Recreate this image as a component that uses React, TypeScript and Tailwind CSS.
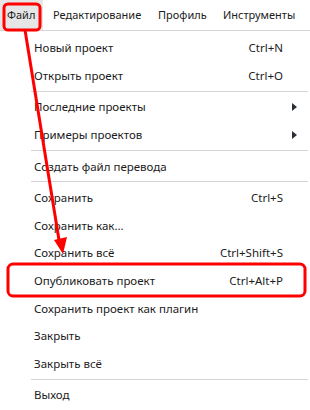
import { Fragment } from "react";

type Item = { label: string; shortcut?: string; sub?: boolean } | "sep";

const items: Item[] = [
  { label: "Новый проект", shortcut: "Ctrl+N" },
  { label: "Открыть проект", shortcut: "Ctrl+O" },
  "sep",
  { label: "Последние проекты", sub: true },
  { label: "Примеры проектов", sub: true },
  "sep",
  { label: "Создать файл перевода" },
  "sep",
  { label: "Сохранить", shortcut: "Ctrl+S" },
  { label: "Сохранить как..." },
  { label: "Сохранить всё", shortcut: "Ctrl+Shift+S" },
  { label: "Опубликовать проект", shortcut: "Ctrl+Alt+P" },
  { label: "Сохранить проект как плагин" },
  { label: "Закрыть" },
  { label: "Закрыть всё" },
  "sep",
  { label: "Выход" },
];

const menus = [
  { label: "Файл", cls: "w-[43px] pl-[7px] bg-[#e6e6e6]" },
  { label: "Редактирование", cls: "w-[105px] pl-[10px]" },
  { label: "Профиль", cls: "w-[65px] pl-[10px]" },
  { label: "Инструменты", cls: "w-[97px] pl-[10px]" },
];

const App = () => {
  return (
    <div
      className="relative w-[310px] h-[410px] bg-white overflow-hidden text-[11.5px] text-[#1b1b1b]"
      style={{ fontFamily: '"Noto Sans", "Open Sans", sans-serif' }}
    >
      <div className="flex h-[31px] border-b border-[#d4d4da] text-[11px]">
        {menus.map((m) => (
          <div key={m.label} className={`flex items-center whitespace-nowrap ${m.cls}`}>
            {m.label}
          </div>
        ))}
      </div>

      <div className="flex flex-col pt-[3px]">
        {items.map((item, index) =>
          item === "sep" ? (
            <div
              key={index}
              className="ml-[31px] mr-[2px] my-[1.5px] h-px bg-[#d4d4da]"
            />
          ) : (
            <div
              key={index}
              className="flex items-center h-[27.6px] pl-[34px] pr-[27px]"
            >
              <span className="flex-1">{item.label}</span>
              {item.shortcut && <span>{item.shortcut}</span>}
              {item.sub && (
                <svg width="5" height="8" viewBox="0 0 5 8" className="-mr-[14px]">
                  <polygon points="0,0 5,4 0,8" fill="#2b2f38" />
                </svg>
              )}
            </div>
          )
        )}
      </div>

      {/* annotation overlay */}
      <svg
        className="absolute left-0 top-0 pointer-events-none"
        width="310"
        height="410"
        viewBox="0 0 310 410"
      >
        <rect x="4" y="4" width="36" height="26" rx="4" fill="none" stroke="#ff0000" strokeWidth="3" />
        <rect x="8" y="264" width="297" height="32" rx="5" fill="none" stroke="#ff0000" strokeWidth="3" />
        <line x1="25" y1="30" x2="59" y2="240" stroke="#ff0000" strokeWidth="3" />
        <polygon points="54,240 67,237 63,254" fill="#ff0000" />
      </svg>
    </div>
  );
};

export default App;
